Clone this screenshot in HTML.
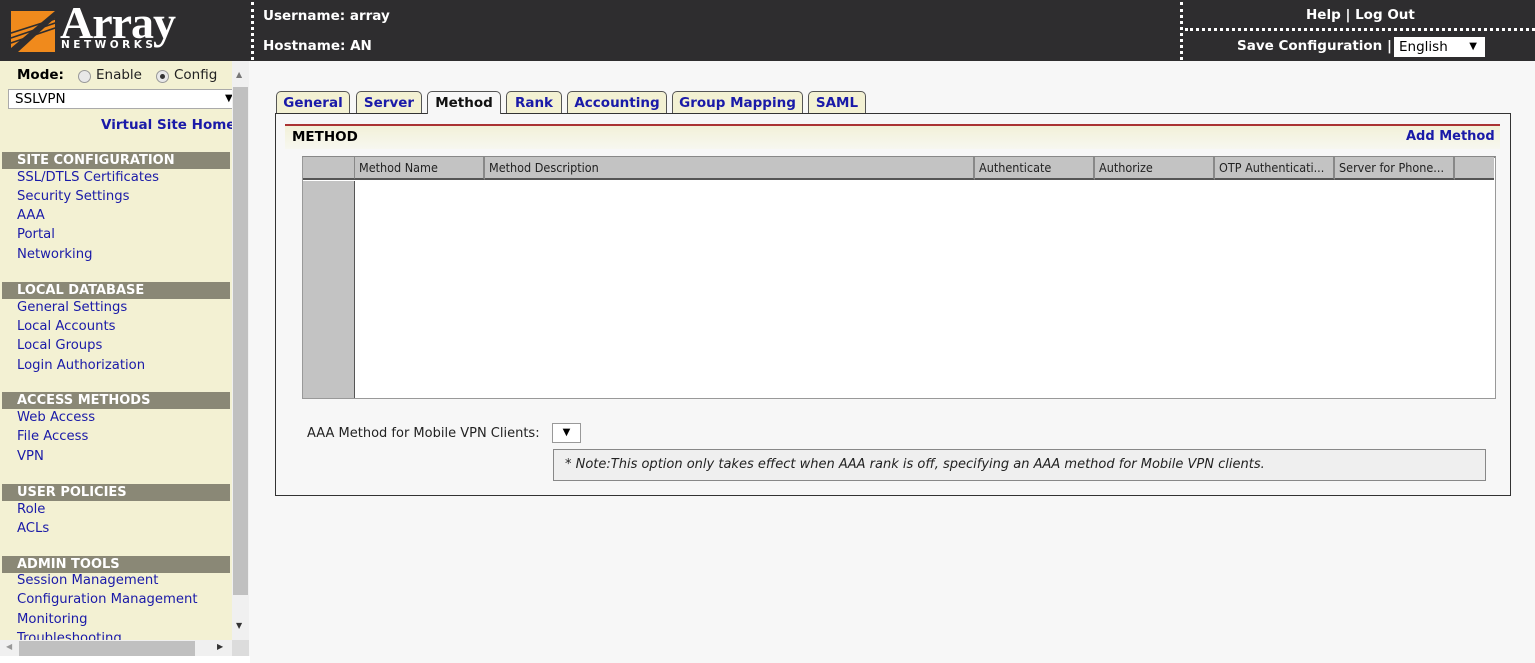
<!DOCTYPE html>
<html><head><meta charset="utf-8"><style>
*{margin:0;padding:0;box-sizing:border-box}
body{width:1535px;height:663px;overflow:hidden;background:#f7f7f7;font-family:"DejaVu Sans",Verdana,sans-serif;font-size:13px;position:relative}
.a{position:absolute}
.hdr{left:0;top:0;width:1535px;height:61px;background:#2e2d2f}
.w{color:#fff;font-weight:bold;font-size:13.5px;white-space:nowrap}
.side{left:0;top:61px;width:232px;height:595px;background:#f3f1d3;overflow:hidden}
.bar{left:2px;width:228px;height:17px;background:#8a8876;color:#fff;font-weight:bold;font-size:13px;padding-left:15px;line-height:17px}
.lk{left:17px;color:#1a1aa8;font-size:13.2px;white-space:nowrap}
.tab{top:91px;height:23px;border:1px solid #555;border-bottom:none;border-radius:5px 5px 0 0;background:#f3f1d3;color:#1a1aa8;font-weight:bold;font-size:13.5px;line-height:22px;text-align:center;font-family:"DejaVu Sans",sans-serif}
.th{top:157px;height:23px;background:#c3c3c3;border-right:2px solid #888;border-bottom:2px solid #555;font-size:12.5px;line-height:22px;padding-left:4px;color:#222;white-space:nowrap;font-family:"DejaVu Sans Condensed","DejaVu Sans",sans-serif}
</style></head><body>
<div class="a hdr"></div>
<svg class="a" style="left:8px;top:8px" width="50" height="46" viewBox="0 0 50 46">
<rect x="0" y="0" width="50" height="46" fill="#2e2d2f"/>
<polygon points="3,3 47,3 3,40" fill="#f08a1c"/>
<polygon points="10,44 47,10 47,44" fill="#f08a1c"/>
<g stroke="#2e2d2f" stroke-width="1.6"><line x1="0" y1="26" x2="50" y2="10"/><line x1="0" y1="31" x2="50" y2="14"/><line x1="0" y1="36" x2="50" y2="19"/></g>
</svg>
<div class="a" style="left:60px;top:0px;color:#fff;font-family:'Liberation Serif',serif;font-weight:bold;font-size:46px;line-height:46px;letter-spacing:-1px">Array</div>
<div class="a" style="left:61px;top:39px;color:#fff;font-weight:bold;font-size:10.5px;letter-spacing:3.5px">NETWORKS</div>
<div class="a" style="left:251px;top:2px;height:58px;border-left:3px dotted #fff"></div>
<div class="a w" style="left:263px;top:8px">Username: array</div>
<div class="a w" style="left:263px;top:38px">Hostname: AN</div>
<div class="a" style="left:1180px;top:2px;height:58px;border-left:3px dotted #fff"></div>
<div class="a" style="left:1185px;top:28px;width:350px;border-top:3px dotted #fff"></div>
<div class="a w" style="left:1306px;top:7px">Help | Log Out</div>
<div class="a w" style="left:1237px;top:38px">Save Configuration |</div>
<div class="a" style="left:1394px;top:37px;width:91px;height:20px;background:#fff;font-size:13.5px;padding-left:5px;line-height:20px">English<span style="position:absolute;right:8px;font-size:10px">▼</span></div>
<div class="a side">
<div class="a" style="left:17px;top:6px;font-weight:bold;font-size:13.5px">Mode:</div>
<div class="a" style="left:78px;top:9px;width:13px;height:13px;border:1px solid #999;border-radius:50%;background:#e8e8e8"></div>
<div class="a" style="left:96px;top:6px;font-size:13.5px;color:#222">Enable</div>
<div class="a" style="left:156px;top:9px;width:13px;height:13px;border:1px solid #999;border-radius:50%;background:#e8e8e8"><div style="margin:3px;width:5px;height:5px;border-radius:50%;background:#333"></div></div>
<div class="a" style="left:174px;top:6px;font-size:13.5px;color:#222">Config</div>
<div class="a" style="left:8px;top:28px;width:230px;height:20px;background:#fff;border:1px solid #aaa;font-size:13.5px;padding-left:6px;line-height:18px">SSLVPN<span style="position:absolute;left:216px;font-size:10px">▼</span></div>
<div class="a" style="left:101px;top:56px;color:#1a1aa8;font-weight:bold;font-size:13.5px;white-space:nowrap">Virtual Site Home</div>
<div class="a bar" style="top:91px">SITE CONFIGURATION</div>
<div class="a lk" style="top:109px">SSL/DTLS Certificates</div>
<div class="a lk" style="top:128px">Security Settings</div>
<div class="a lk" style="top:147px">AAA</div>
<div class="a lk" style="top:166px">Portal</div>
<div class="a lk" style="top:186px">Networking</div>
<div class="a bar" style="top:221px">LOCAL DATABASE</div>
<div class="a lk" style="top:239px">General Settings</div>
<div class="a lk" style="top:258px">Local Accounts</div>
<div class="a lk" style="top:277px">Local Groups</div>
<div class="a lk" style="top:297px">Login Authorization</div>
<div class="a bar" style="top:331px">ACCESS METHODS</div>
<div class="a lk" style="top:349px">Web Access</div>
<div class="a lk" style="top:368px">File Access</div>
<div class="a lk" style="top:388px">VPN</div>
<div class="a bar" style="top:423px">USER POLICIES</div>
<div class="a lk" style="top:441px">Role</div>
<div class="a lk" style="top:460px">ACLs</div>
<div class="a bar" style="top:495px">ADMIN TOOLS</div>
<div class="a lk" style="top:512px">Session Management</div>
<div class="a lk" style="top:531px">Configuration Management</div>
<div class="a lk" style="top:551px">Monitoring</div>
<div class="a lk" style="top:570px">Troubleshooting</div>
</div>
<div class="a" style="left:232px;top:61px;width:17px;height:579px;background:#f0f0f0"></div>
<div class="a" style="left:233px;top:87px;width:15px;height:508px;background:#c0c0c0"></div>
<div class="a" style="left:236px;top:70px;font-size:8px;color:#777">▲</div>
<div class="a" style="left:236px;top:621px;font-size:8px;color:#333">▼</div>
<div class="a" style="left:0;top:640px;width:232px;height:16px;background:#f0f0f0"></div>
<div class="a" style="left:19px;top:641px;width:176px;height:15px;background:#c0c0c0"></div>
<div class="a" style="left:6px;top:642px;font-size:8px;color:#999">◀</div>
<div class="a" style="left:217px;top:642px;font-size:8px;color:#333">▶</div>
<div class="a" style="left:232px;top:640px;width:17px;height:16px;background:#dcdcdc"></div>
<div class="a" style="left:0;top:656px;width:250px;height:7px;background:#fff"></div>
<div class="a tab" style="left:276px;width:74px">General</div>
<div class="a tab" style="left:356px;width:66px">Server</div>
<div class="a tab" style="left:427px;width:74px;background:#f7f7f7;color:#111;height:23px;z-index:2">Method</div>
<div class="a tab" style="left:506px;width:56px">Rank</div>
<div class="a tab" style="left:567px;width:100px">Accounting</div>
<div class="a tab" style="left:672px;width:131px">Group Mapping</div>
<div class="a tab" style="left:808px;width:58px">SAML</div>
<div class="a" style="left:275px;top:113px;width:1236px;height:383px;border:1px solid #333;background:#f7f7f7"></div>
<div class="a" style="left:285px;top:124px;width:1215px;height:25px;border-top:2px solid #a33;background:linear-gradient(#f2f1d8,#f7f7ef)"></div>
<div class="a" style="left:292px;top:129px;font-weight:bold;font-size:13.5px">METHOD</div>
<div class="a" style="left:1406px;top:129px;font-weight:bold;font-size:13px;color:#1a1aa8">Add Method</div>
<div class="a" style="left:302px;top:156px;width:1194px;height:243px;background:#fff;border:1px solid #999;border-top:2px solid #888"></div>
<div class="a" style="left:303px;top:181px;width:52px;height:217px;background:#c3c3c3;border-right:1px solid #555"></div>
<div class="a th" style="left:303px;width:53px"></div>
<div class="a th" style="left:355px;width:130px">Method Name</div>
<div class="a th" style="left:485px;width:490px">Method Description</div>
<div class="a th" style="left:975px;width:120px">Authenticate</div>
<div class="a th" style="left:1095px;width:120px">Authorize</div>
<div class="a th" style="left:1215px;width:120px">OTP Authenticati...</div>
<div class="a th" style="left:1335px;width:120px">Server for Phone...</div>
<div class="a th" style="left:1455px;width:39px;border-right:none"></div>
<div class="a" style="left:307px;top:426px;font-size:13px;color:#222">AAA Method for Mobile VPN Clients:</div>
<div class="a" style="left:552px;top:423px;width:29px;height:20px;background:#fff;border:1px solid #999;font-size:10px;text-align:center;line-height:18px">▼</div>
<div class="a" style="left:553px;top:449px;width:933px;height:32px;background:#efefef;border:1px solid #888;font-style:italic;font-size:13px;padding-left:11px;line-height:30px;color:#222">* Note:This option only takes effect when AAA rank is off, specifying an AAA method for Mobile VPN clients.</div>
</body></html>
